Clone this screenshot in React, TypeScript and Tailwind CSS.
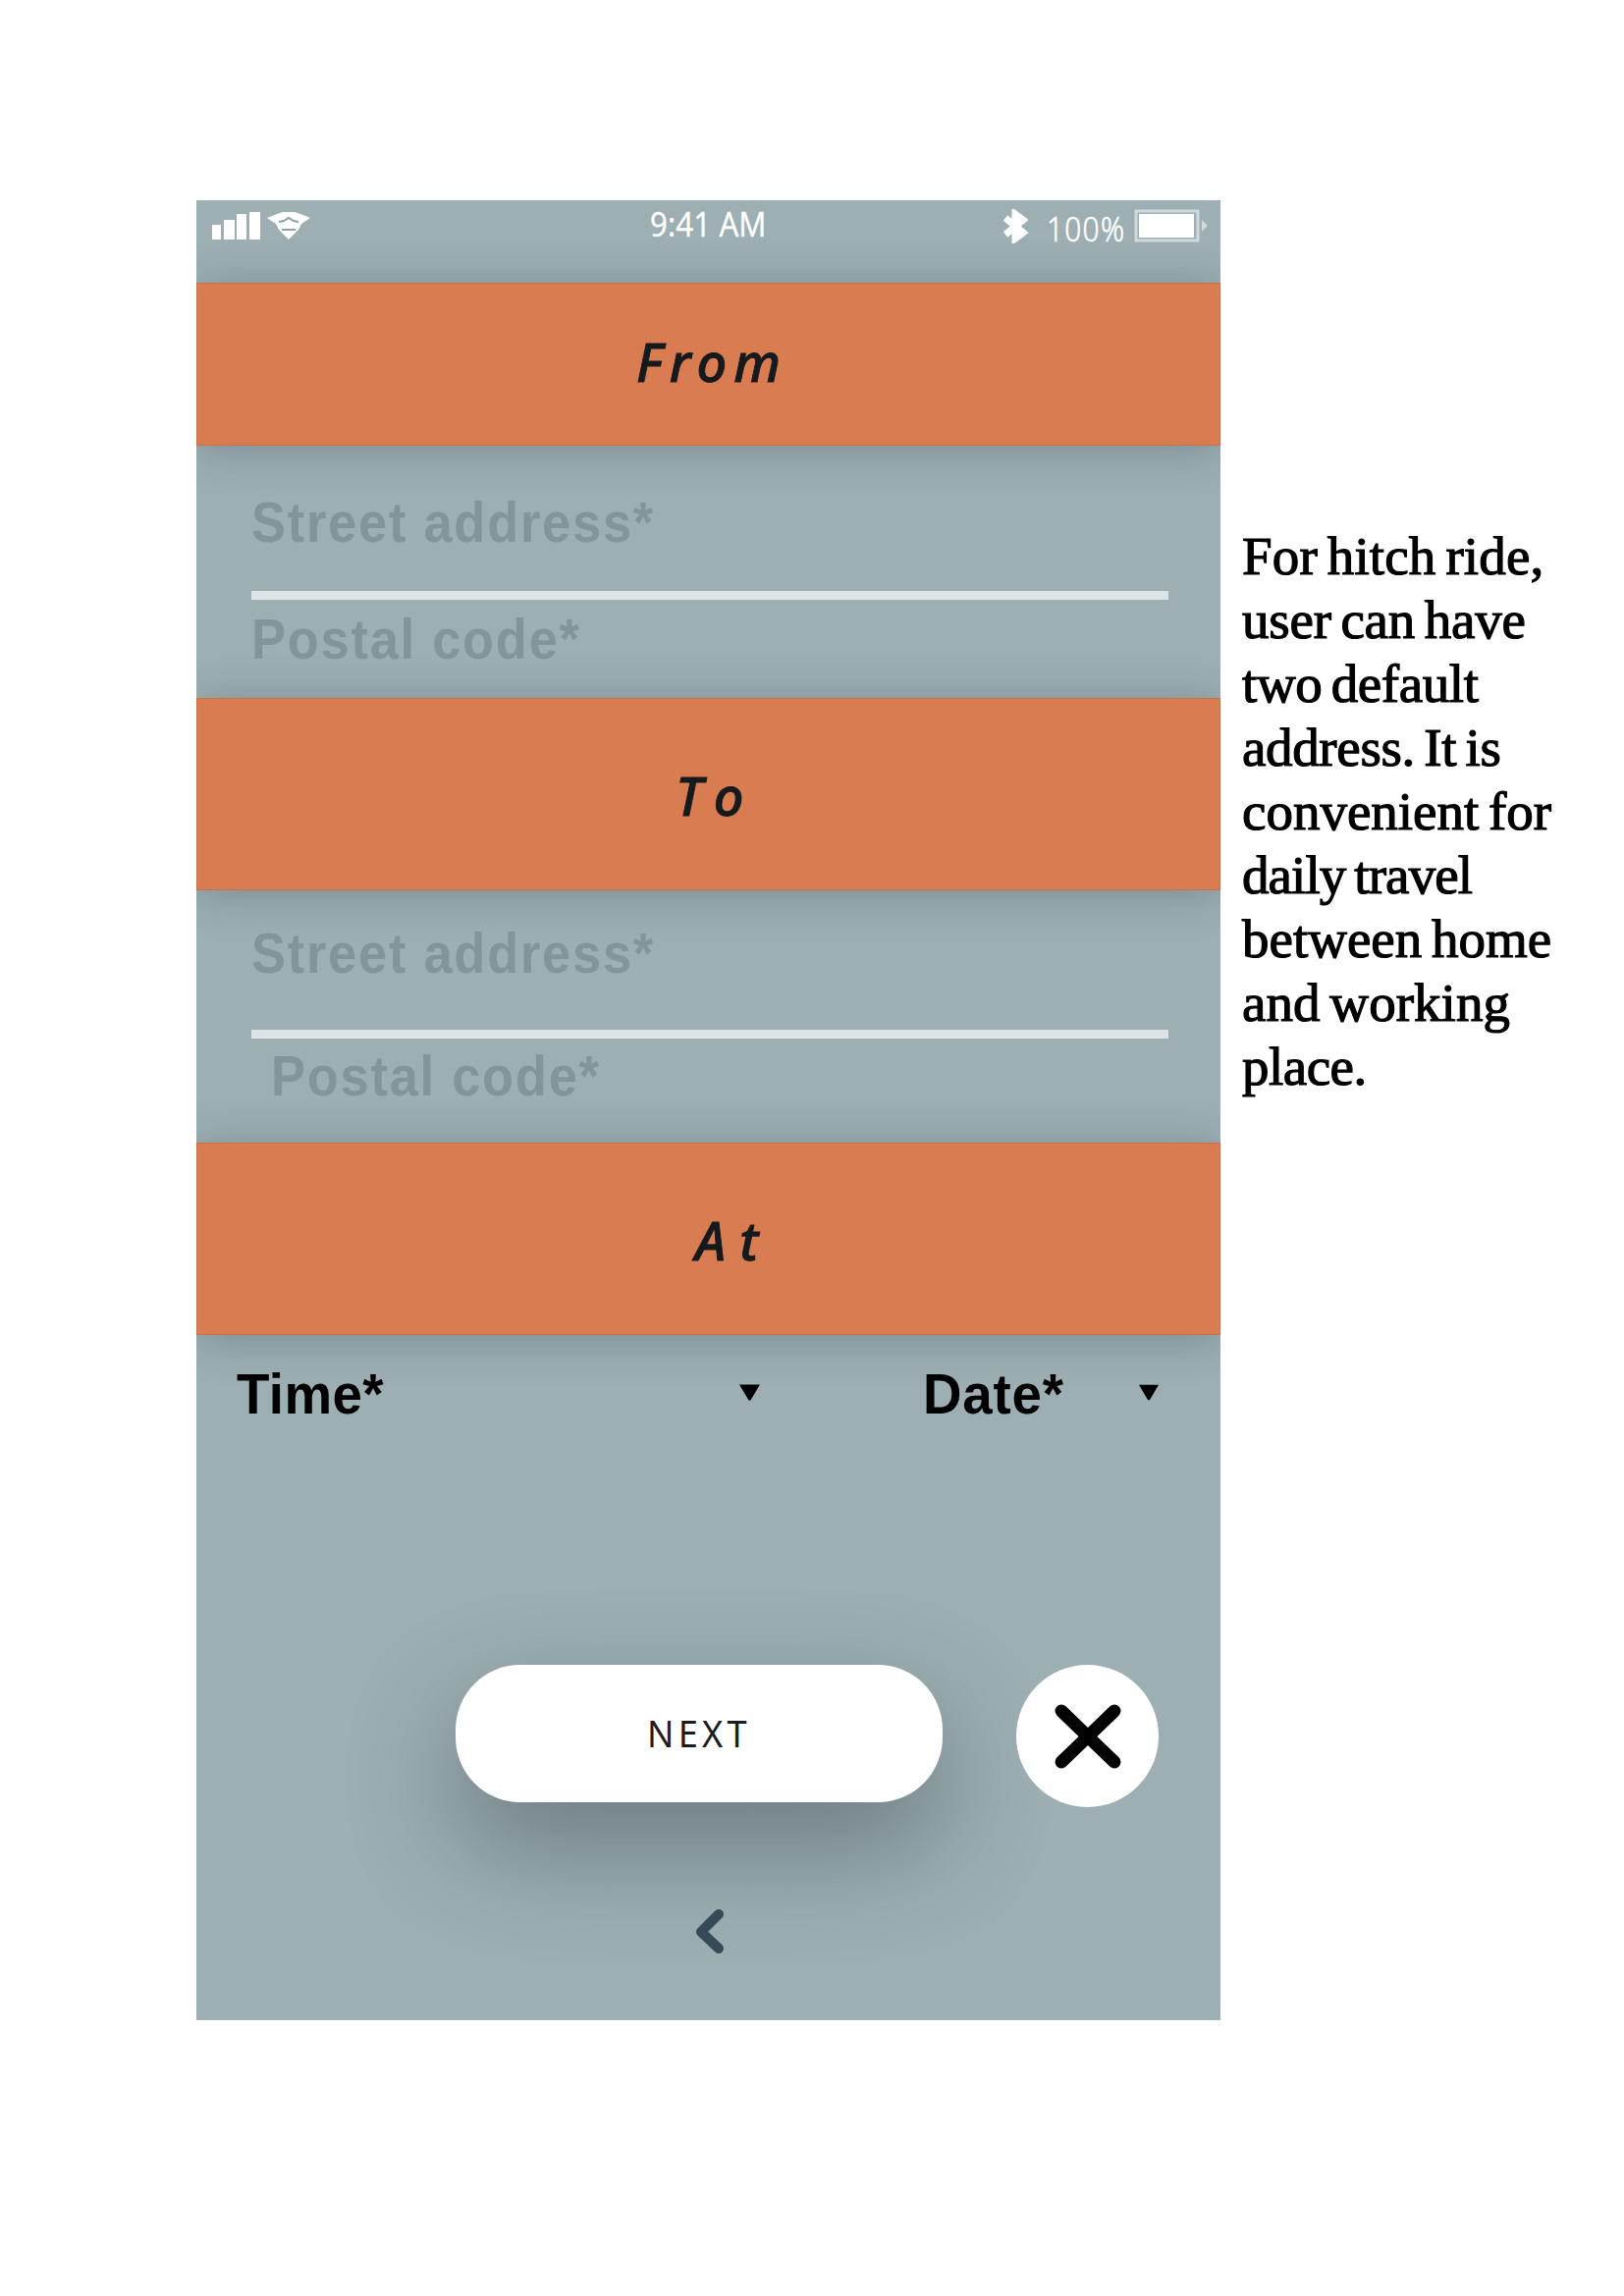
import type { ReactNode } from "react";

function StatusBar() {
  return (
    <header className="flex h-[84px] shrink-0 items-start text-white">
      <svg className="ml-[16px] mt-[11px] h-[30px] w-[50px]" viewBox="0 0 50 30" fill="currentColor">
        <rect x="0" y="14" width="9" height="15" />
        <rect x="12" y="9" width="11" height="20" />
        <rect x="25" y="3" width="10" height="26" />
        <rect x="38" y="1" width="11" height="28" />
      </svg>
      <svg className="ml-[6px] mt-[11px] h-[30px] w-[44px]" viewBox="0 0 44 30">
        <path d="M0 7L10 3L16 1H28L34 3L44 7L35 13L32 19L22 29L12 19L9 13Z" fill="white" />
        <path d="M12 11L17 10L22 7L27 10L32 11M15 19H29" fill="none" stroke="#8fa2a6" strokeWidth="2" />
      </svg>
      <span className="ml-[346px] mt-[4px] w-[129px] origin-left scale-x-[0.92] whitespace-nowrap font-['Open_Sans'] text-[34px] leading-[40px] tracking-[0.1px] [-webkit-text-stroke:0.4px_white]">
        9:41 AM
      </span>
      <svg className="ml-[230px] mt-[9px] h-[35px] w-[26px]" viewBox="0 0 26 35" fill="none" stroke="white" strokeWidth="7">
        <path d="M3 9L21 24L13 30V5L21 11L3 26" />
      </svg>
      <span className="ml-[19px] mt-[9px] w-[84px] origin-left scale-x-[0.88] whitespace-nowrap font-['Open_Sans'] text-[34px] font-light leading-[40px] tracking-[1.4px] [-webkit-text-stroke:0.7px_white]">
        100%
      </span>
      <svg className="ml-[5px] mt-[9px] h-[34px] w-[78px]" viewBox="0 0 78 34">
        <rect x="2" y="2" width="63" height="30" fill="none" stroke="#d0dadc" strokeWidth="3" />
        <rect x="5" y="5" width="56" height="24" fill="white" />
        <path d="M69 11L75 17L69 23Z" fill="#d0dadc" />
      </svg>
    </header>
  );
}

function Band({ className, children }: { className: string; children: ReactNode }) {
  return (
    <h2
      className={`flex shrink-0 items-start border border-[#c6724b] bg-[#d97c52] font-['Noto_Sans'] text-[54px] font-medium italic leading-none text-[#151a1c] shadow-[0_4px_42px_rgba(20,40,45,0.26)] [-webkit-text-stroke:0.9px_#151a1c] ${className}`}
    >
      {children}
    </h2>
  );
}

const field =
  "block origin-left scale-x-[0.92] whitespace-nowrap text-[57px] font-bold leading-none tracking-[1.9px] text-[#82969a]";

const note = [
  { text: "For hitch ride,", style: "tracking-[0.15px]" },
  { text: "user can have", style: "tracking-[-0.2px]" },
  { text: "two default", style: "tracking-[-0.4px]" },
  { text: "address. It is", style: "tracking-[-0.35px]" },
  { text: "convenient for", style: "tracking-[0px]" },
  { text: "daily travel", style: "tracking-[-0.9px]" },
  { text: "between home", style: "tracking-[0px]" },
  { text: "and working", style: "tracking-[0.05px]" },
  { text: "place.", style: "tracking-[-0.5px]" },
];

export default function App() {
  return (
    <div className="flex h-[2339px] w-[1654px] items-start overflow-hidden bg-white pl-[200px] pt-[204px]">
      <main className="flex h-[1854px] w-[1043px] shrink-0 flex-col overflow-hidden bg-[#9dafb3] font-['Liberation_Sans']">
        <StatusBar />
        <Band className="h-[166px] pl-[447px] pt-[52px]">
          <span className="tracking-[7px]">From</span>
        </Band>
        <section className="h-[257px] shrink-0 pl-[56px] pr-[53px] pt-[50px]">
          <span className={field}>Street address*</span>
          <div className="mt-[41px] h-[9px] bg-[#dce3e7]" />
          <span className={`mt-[12px] ${field}`}>Postal code*</span>
        </section>
        <Band className="h-[196px] pl-[487px] pt-[71px]">
          <span className="tracking-[15px]">To</span>
        </Band>
        <section className="h-[257px] shrink-0 pl-[56px] pr-[53px] pt-[36px]">
          <span className={field}>Street address*</span>
          <div className="mt-[49px] h-[9px] bg-[#dde2e4]" />
          <span className={`mt-[10px] ml-[20px] ${field}`}>Postal code*</span>
        </section>
        <Band className="h-[196px] pl-[507px] pt-[71px]">
          <span className="tracking-[14px]">At</span>
        </Band>
        <section className="flex h-[336px] shrink-0 items-start pl-[41px] pt-[32px] text-[57px] font-bold leading-none text-black">
          <span className="w-[512px] origin-left scale-x-[0.96] tracking-[0.4px]">Time*</span>
          <svg className="mt-[18px] h-[17px] w-[21px]" viewBox="0 0 22 17">
            <path d="M0 0H22L12 17H10Z" />
          </svg>
          <span className="ml-[166px] w-[220px] origin-left scale-x-[0.96] tracking-[0.8px]">Date*</span>
          <svg className="mt-[18px] h-[17px] w-[20px]" viewBox="0 0 22 17">
            <path d="M0 0H22L12 17H10Z" />
          </svg>
        </section>
        <div className="flex shrink-0 items-start pl-[264px]">
          <button className="flex h-[140px] w-[496px] items-center rounded-[66px] bg-white pb-[3px] pl-[195px] font-['Noto_Sans'] text-[38px] leading-none text-[#1c1c1c] shadow-[0_44px_110px_rgba(40,50,55,0.42)]">
            <span className="origin-left scale-x-[0.95] tracking-[4.5px]">NEXT</span>
          </button>
          <button className="ml-[75px] flex size-[145px] items-center justify-center rounded-full bg-white">
            <svg className="h-[68px] w-[70px]" viewBox="0 0 70 68" stroke="black" strokeWidth="13" strokeLinecap="round">
              <path d="M8 8L62 60M62 8L8 60" />
            </svg>
          </button>
        </div>
        <svg className="ml-[507px] mt-[101px] h-[50px] w-[32px]" viewBox="0 0 32 50" fill="none" stroke="#364b57" strokeWidth="10" strokeLinecap="round" strokeLinejoin="round">
          <path d="M25 8L7 26L25 43" />
        </svg>
      </main>
      <aside className="ml-[22px] mt-[330px] font-['Liberation_Serif'] text-[55px] leading-[65px] text-black [-webkit-text-stroke:1.2px_black] [word-spacing:-4px]">
        {note.map((line) => (
          <p key={line.text} className={`whitespace-nowrap ${line.style}`}>
            {line.text}
          </p>
        ))}
      </aside>
    </div>
  );
}
